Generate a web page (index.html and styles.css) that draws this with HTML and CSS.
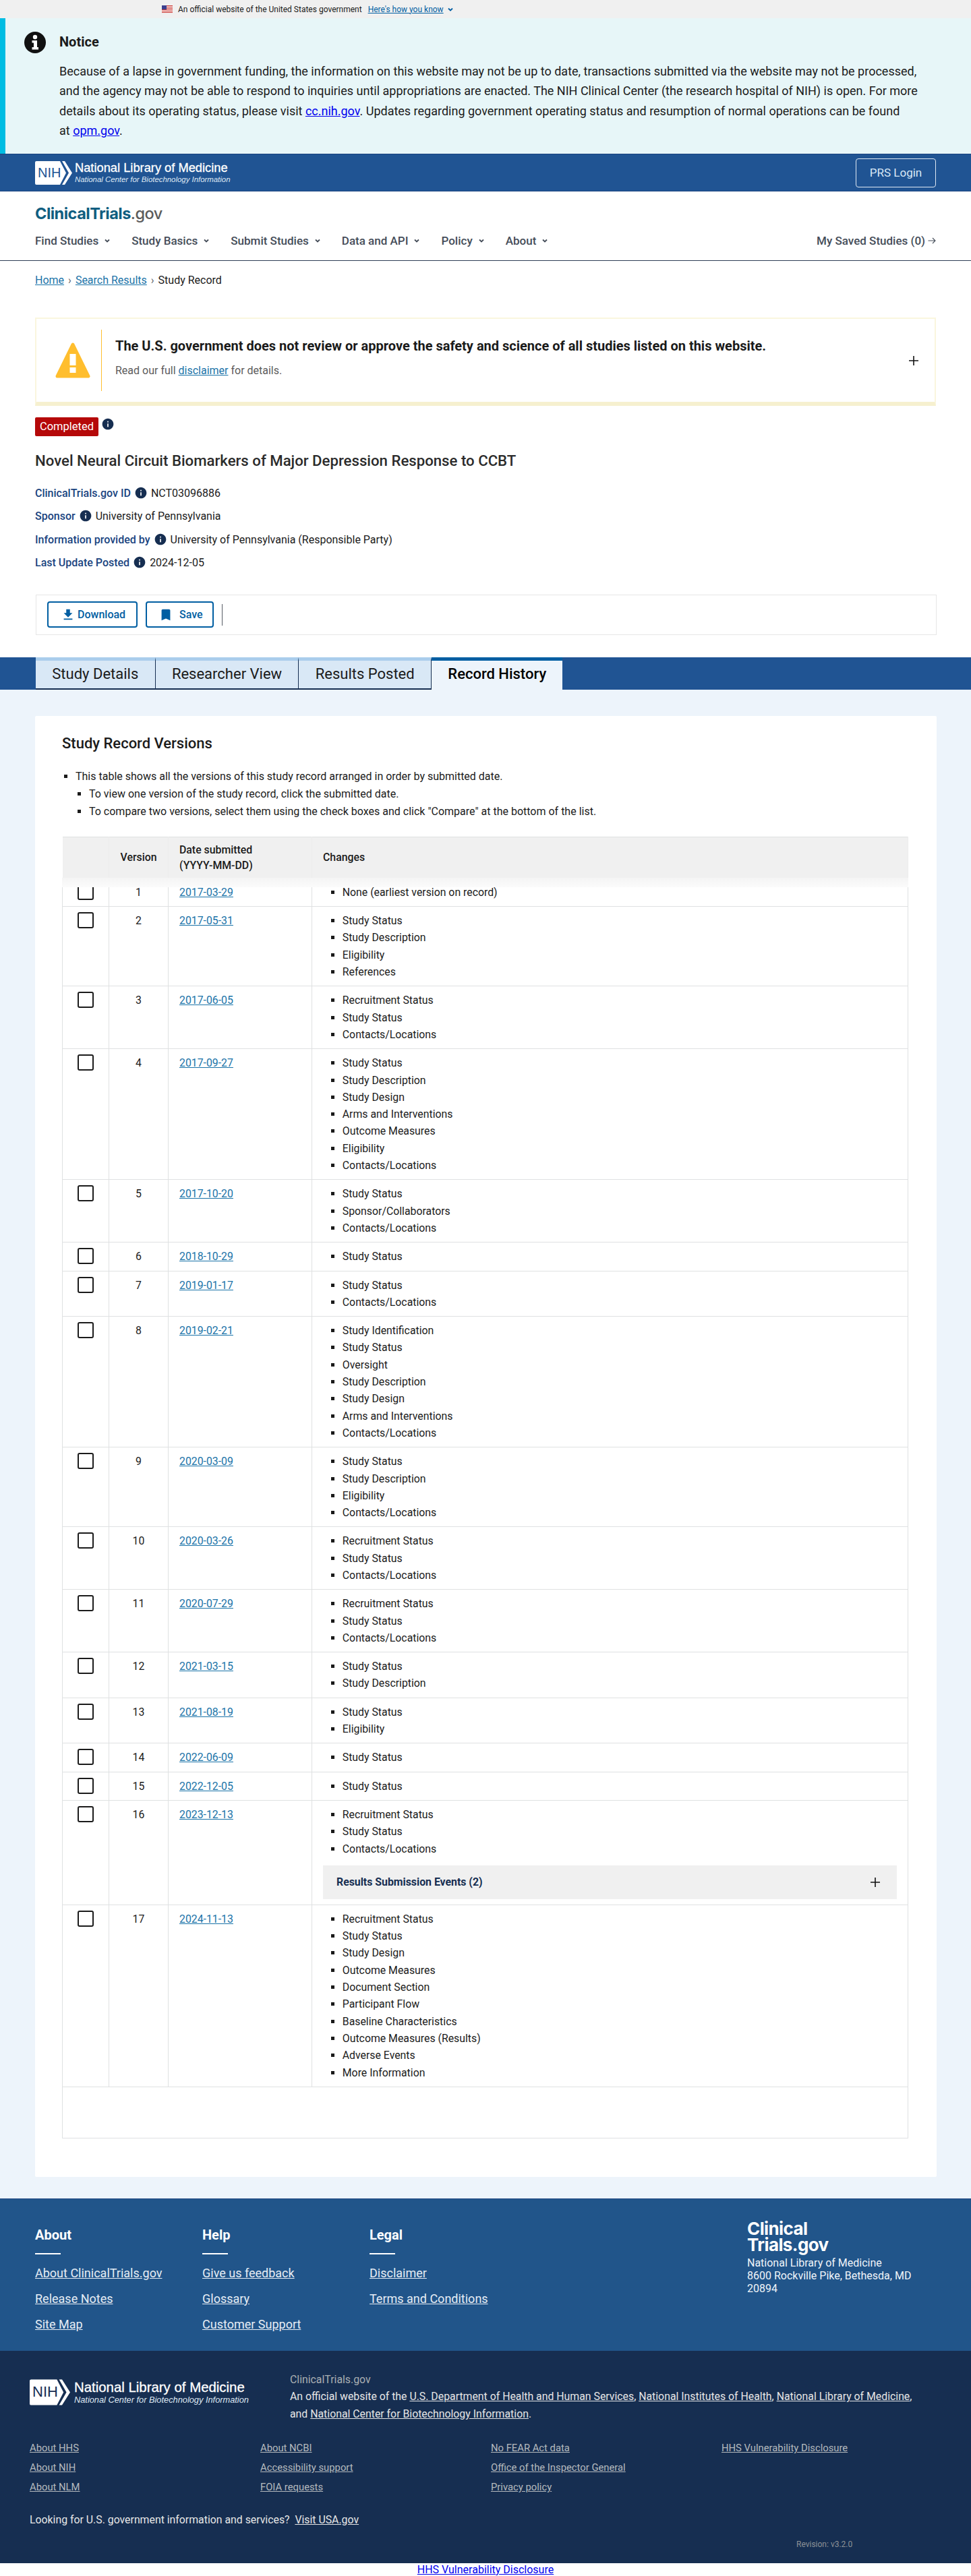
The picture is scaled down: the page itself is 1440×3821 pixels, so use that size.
FILE: index.html
```html
<!DOCTYPE html>
<html lang="en">
<head>
    <meta charset="UTF-8">
    <meta name="viewport" content="width=device-width, initial-scale=1.0">
    <title>Record History | ClinicalTrials.gov</title>
    <link rel="stylesheet" href="styles.css">
</head>
<body>
    <!-- Shared icons -->
    <svg class="icon-defs" aria-hidden="true">
        <symbol id="i-info" viewBox="0 0 24 24"><path d="M12 2C6.48 2 2 6.48 2 12s4.48 10 10 10 10-4.48 10-10S17.52 2 12 2zm1 15h-2v-6h2v6zm0-8h-2V7h2v2z"/></symbol>
        <symbol id="i-chev" viewBox="0 0 10 10"><path d="M2 3.5 5 6.5 8 3.5" fill="none" stroke="currentColor" stroke-width="1.8"/></symbol>
        <symbol id="i-plus" viewBox="0 0 14 14"><path d="M6.2 0h1.6v6.2H14v1.6H7.800V14H6.200V7.800H0V6.200h6.200z"/></symbol>
        <symbol id="i-nih" viewBox="0 0 55 35"><path d="M2 0H37L46 17.500 37 35H2Q0 35 0 33V2Q0 0 2 0zM40 0H44L55 17.500 44 35H40L50 17.500z"/></symbol>
    </svg>

    <!-- Gov banner -->
    <div class="gov-banner">
        <svg class="flag" viewBox="0 0 16 11">
            <rect width="16" height="11" fill="#fff"/>
            <path d="M0 0h16v1H0zM0 2h16v1H0zM0 4h16v1H0zM0 6h16v1H0zM0 8h16v1H0zM0 10h16v1H0z" fill="#c9342f"/>
            <rect width="7" height="6" fill="#3b3f8f"/>
        </svg>
        <span>An official website of the United States government</span>
        <a href="#">Here's how you know</a>
        <svg class="chev chev-blue"><use href="#i-chev"/></svg>
    </div>

    <!-- Notice -->
    <section class="notice">
        <svg class="notice-icon" viewBox="0 0 32 32">
            <circle cx="16" cy="16" r="16" fill="#111"/>
            <circle cx="16" cy="8" r="3.200" fill="#fff"/>
            <path d="M11.500 13h7.500v10h2v3.500H11.500V23h2.500v-6.500h-2.500z" fill="#fff"/>
        </svg>
        <div>
            <h2>Notice</h2>
            <p>Because of a lapse in government funding, the information on this website may not be up to date, transactions submitted via the website may not be processed, and the agency may not be able to respond to inquiries until appropriations are enacted. The NIH Clinical Center (the research hospital of NIH) is open. For more details about its operating status, please visit <a href="#">cc.nih.gov</a>. Updates regarding government operating status and resumption of normal operations can be found at&nbsp;<a href="#">opm.gov</a>.</p>
        </div>
    </section>

    <!-- NLM bar -->
    <div class="nlm-bar">
        <div class="nlm-logo">
            <div class="nih-mark">
                <svg><use href="#i-nih"/></svg>
                <span>NIH</span>
            </div>
            <div class="nlm-names">
                <div class="nlm-name">National Library of Medicine</div>
                <div class="nlm-sub">National Center for Biotechnology Information</div>
            </div>
        </div>
        <a class="prs-login" href="#">PRS Login</a>
    </div>

    <!-- Site header -->
    <header class="site-header">
        <div class="site-logo">ClinicalTrials<span>.gov</span></div>
        <nav class="site-nav">
            <a href="#">Find Studies<svg class="chev"><use href="#i-chev"/></svg></a>
            <a href="#">Study Basics<svg class="chev"><use href="#i-chev"/></svg></a>
            <a href="#">Submit Studies<svg class="chev"><use href="#i-chev"/></svg></a>
            <a href="#">Data and API<svg class="chev"><use href="#i-chev"/></svg></a>
            <a href="#">Policy<svg class="chev"><use href="#i-chev"/></svg></a>
            <a href="#">About<svg class="chev"><use href="#i-chev"/></svg></a>
            <a class="saved" href="#">My Saved Studies (0)<svg class="arrow" viewBox="0 0 12 12"><path d="M0.500 6H11M7 2l4 4-4 4" fill="none" stroke="currentColor" stroke-width="1.100"/></svg></a>
        </nav>
    </header>

    <!-- Study summary -->
    <div class="study-top">
        <div class="breadcrumb">
            <a href="#">Home</a><span class="sep">&rsaquo;</span><a href="#">Search Results</a><span class="sep">&rsaquo;</span><span>Study Record</span>
        </div>

        <div class="disclaimer">
            <svg class="warn-icon" viewBox="0 0 52 53">
                <path d="M26 3 49 50H3z" fill="#ffbe2e" stroke="#ffbe2e" stroke-width="5" stroke-linejoin="round"/>
                <rect x="21.500" y="17" width="9" height="17" fill="#fff"/>
                <rect x="21.500" y="37" width="9" height="8" fill="#fff"/>
            </svg>
            <div class="disclaimer-text">
                <h3>The U.S. government does not review or approve the safety and science of all studies listed on this website.</h3>
                <p>Read our full <a href="#">disclaimer</a> for details.</p>
            </div>
            <svg class="plus"><use href="#i-plus"/></svg>
        </div>

        <div class="status-row">
            <span class="badge">Completed</span>
            <svg class="info"><use href="#i-info"/></svg>
        </div>

        <h1>Novel Neural Circuit Biomarkers of Major Depression Response to CCBT</h1>

        <div class="meta"><b>ClinicalTrials.gov ID</b><svg class="info"><use href="#i-info"/></svg><span>NCT03096886</span></div>
        <div class="meta"><b>Sponsor</b><svg class="info"><use href="#i-info"/></svg><span>University of Pennsylvania</span></div>
        <div class="meta"><b>Information provided by</b><svg class="info"><use href="#i-info"/></svg><span>University of Pennsylvania (Responsible Party)</span></div>
        <div class="meta"><b>Last Update Posted</b><svg class="info"><use href="#i-info"/></svg><span>2024-12-05</span></div>

        <div class="actions">
            <button class="btn btn-download">
                <svg viewBox="0 0 24 24"><path d="M19 9h-4V3H9v6H5l7 7 7-7zM5 18v2h14v-2H5z"/></svg>Download
            </button>
            <button class="btn btn-save">
                <svg viewBox="0 0 24 24"><path d="M17 3H7c-1.100 0-1.990.9-1.990 2L5 21l7-3 7 3V5c0-1.100-.9-2-2-2z"/></svg>Save
            </button>
            <span class="actions-divider"></span>
        </div>
    </div>

    <!-- Tabs -->
    <div class="tabs">
        <a class="tab" href="#">Study Details</a>
        <a class="tab" href="#">Researcher View</a>
        <a class="tab" href="#">Results Posted</a>
        <a class="tab active" href="#">Record History</a>
    </div>

    <main class="page-bg">
        <section class="card">
            <h2>Study Record Versions</h2>
            <ul class="intro">
                <li>This table shows all the versions of this study record arranged in order by submitted date.
                    <ul>
                        <li>To view one version of the study record, click the submitted date.</li>
                        <li>To compare two versions, select them using the check boxes and click "Compare" at the bottom of the list.</li>
                    </ul>
                </li>
            </ul>

            <div class="table-wrap">
                <table class="versions">
                    <colgroup>
                        <col class="col-check"><col class="col-version"><col class="col-date"><col>
                    </colgroup>
                    <thead>
                        <tr>
                            <th></th>
                            <th class="center">Version</th>
                            <th>Date submitted<br>(YYYY-MM-DD)</th>
                            <th>Changes</th>
                        </tr>
                    </thead>
                    <tbody>
                        <tr>
                            <td><span class="check"></span></td><td class="center">1</td><td><a href="#">2017-03-29</a></td>
                            <td><ul><li>None (earliest version on record)</li></ul></td>
                        </tr>
                        <tr>
                            <td><span class="check"></span></td><td class="center">2</td><td><a href="#">2017-05-31</a></td>
                            <td><ul><li>Study Status</li><li>Study Description</li><li>Eligibility</li><li>References</li></ul></td>
                        </tr>
                        <tr>
                            <td><span class="check"></span></td><td class="center">3</td><td><a href="#">2017-06-05</a></td>
                            <td><ul><li>Recruitment Status</li><li>Study Status</li><li>Contacts/Locations</li></ul></td>
                        </tr>
                        <tr>
                            <td><span class="check"></span></td><td class="center">4</td><td><a href="#">2017-09-27</a></td>
                            <td><ul><li>Study Status</li><li>Study Description</li><li>Study Design</li><li>Arms and Interventions</li><li>Outcome Measures</li><li>Eligibility</li><li>Contacts/Locations</li></ul></td>
                        </tr>
                        <tr>
                            <td><span class="check"></span></td><td class="center">5</td><td><a href="#">2017-10-20</a></td>
                            <td><ul><li>Study Status</li><li>Sponsor/Collaborators</li><li>Contacts/Locations</li></ul></td>
                        </tr>
                        <tr>
                            <td><span class="check"></span></td><td class="center">6</td><td><a href="#">2018-10-29</a></td>
                            <td><ul><li>Study Status</li></ul></td>
                        </tr>
                        <tr>
                            <td><span class="check"></span></td><td class="center">7</td><td><a href="#">2019-01-17</a></td>
                            <td><ul><li>Study Status</li><li>Contacts/Locations</li></ul></td>
                        </tr>
                        <tr>
                            <td><span class="check"></span></td><td class="center">8</td><td><a href="#">2019-02-21</a></td>
                            <td><ul><li>Study Identification</li><li>Study Status</li><li>Oversight</li><li>Study Description</li><li>Study Design</li><li>Arms and Interventions</li><li>Contacts/Locations</li></ul></td>
                        </tr>
                        <tr>
                            <td><span class="check"></span></td><td class="center">9</td><td><a href="#">2020-03-09</a></td>
                            <td><ul><li>Study Status</li><li>Study Description</li><li>Eligibility</li><li>Contacts/Locations</li></ul></td>
                        </tr>
                        <tr>
                            <td><span class="check"></span></td><td class="center">10</td><td><a href="#">2020-03-26</a></td>
                            <td><ul><li>Recruitment Status</li><li>Study Status</li><li>Contacts/Locations</li></ul></td>
                        </tr>
                        <tr>
                            <td><span class="check"></span></td><td class="center">11</td><td><a href="#">2020-07-29</a></td>
                            <td><ul><li>Recruitment Status</li><li>Study Status</li><li>Contacts/Locations</li></ul></td>
                        </tr>
                        <tr>
                            <td><span class="check"></span></td><td class="center">12</td><td><a href="#">2021-03-15</a></td>
                            <td><ul><li>Study Status</li><li>Study Description</li></ul></td>
                        </tr>
                        <tr>
                            <td><span class="check"></span></td><td class="center">13</td><td><a href="#">2021-08-19</a></td>
                            <td><ul><li>Study Status</li><li>Eligibility</li></ul></td>
                        </tr>
                        <tr>
                            <td><span class="check"></span></td><td class="center">14</td><td><a href="#">2022-06-09</a></td>
                            <td><ul><li>Study Status</li></ul></td>
                        </tr>
                        <tr>
                            <td><span class="check"></span></td><td class="center">15</td><td><a href="#">2022-12-05</a></td>
                            <td><ul><li>Study Status</li></ul></td>
                        </tr>
                        <tr>
                            <td><span class="check"></span></td><td class="center">16</td><td><a href="#">2023-12-13</a></td>
                            <td>
                                <ul><li>Recruitment Status</li><li>Study Status</li><li>Contacts/Locations</li></ul>
                                <div class="events"><b>Results Submission Events (2)</b><svg class="plus"><use href="#i-plus"/></svg></div>
                            </td>
                        </tr>
                        <tr>
                            <td><span class="check"></span></td><td class="center">17</td><td><a href="#">2024-11-13</a></td>
                            <td><ul><li>Recruitment Status</li><li>Study Status</li><li>Study Design</li><li>Outcome Measures</li><li>Document Section</li><li>Participant Flow</li><li>Baseline Characteristics</li><li>Outcome Measures (Results)</li><li>Adverse Events</li><li>More Information</li></ul></td>
                        </tr>
                    </tbody>
                </table>
                <div class="table-foot"></div>
                <!-- sticky header runs over the top of row 1 -->
                <div class="header-fade"></div>
            </div>
        </section>
    </main>

    <!-- Footer -->
    <footer>
        <div class="footer-top">
            <div class="footer-col">
                <h4>About</h4>
                <a href="#">About ClinicalTrials.gov</a>
                <a href="#">Release Notes</a>
                <a href="#">Site Map</a>
            </div>
            <div class="footer-col">
                <h4>Help</h4>
                <a href="#">Give us feedback</a>
                <a href="#">Glossary</a>
                <a href="#">Customer Support</a>
            </div>
            <div class="footer-col">
                <h4>Legal</h4>
                <a href="#">Disclaimer</a>
                <a href="#">Terms and Conditions</a>
            </div>
            <div class="footer-address">
                <div class="footer-logo">Clinical<br>Trials.gov</div>
                <p>National Library of Medicine<br>8600 Rockville Pike, Bethesda, MD 20894</p>
            </div>
        </div>

        <div class="footer-bottom">
            <div class="footer-brand">
                <div class="nlm-logo footer-nlm">
                    <div class="nih-mark">
                        <svg><use href="#i-nih"/></svg>
                        <span>NIH</span>
                    </div>
                    <div class="nlm-names">
                        <div class="nlm-name">National Library of Medicine</div>
                        <div class="nlm-sub">National Center for Biotechnology Information</div>
                    </div>
                </div>
                <div class="footer-official">
                    <div class="footer-site">ClinicalTrials.gov</div>
                    An official website of the <a href="#">U.S. Department of Health and Human Services</a>, <a href="#">National Institutes of Health</a>, <a href="#">National Library of Medicine</a>, and <a href="#">National Center for Biotechnology Information</a>.
                </div>
            </div>
            <div class="footer-links">
                <a href="#">About HHS</a>
                <a href="#">About NCBI</a>
                <a href="#">No FEAR Act data</a>
                <a href="#">HHS Vulnerability Disclosure</a>
                <a href="#">About NIH</a>
                <a href="#">Accessibility support</a>
                <a href="#">Office of the Inspector General</a>
                <span></span>
                <a href="#">About NLM</a>
                <a href="#">FOIA requests</a>
                <a href="#">Privacy policy</a>
            </div>
            <div class="footer-usa">Looking for U.S. government information and services?&nbsp; <a href="#">Visit USA.gov</a></div>
            <div class="footer-revision">Revision: v3.2.0</div>
        </div>
    </footer>
    <div class="vuln-link"><a href="#">HHS Vulnerability Disclosure</a></div>
</body>
</html>
```

FILE: styles.css
```css
/* Global */
* {
    box-sizing: border-box;
}
body {
    margin: 0;
    font-family: Roboto, "Liberation Sans", sans-serif;
    font-size: 16px;
    line-height: 26px;
    color: #1b1b1b;
    background-color: #fff;
}
h1, h2, h3, h4, p, ul {
    margin: 0;
}
.icon-defs {
    display: none;
}

/* Gov banner */
.gov-banner {
    display: flex;
    align-items: center;
    height: 27px;
    padding-left: 240px;
    background-color: #f0f0f0;
    font-size: 12px;
    line-height: 16px;
}
.flag {
    width: 16px;
    height: 11px;
    margin-right: 8px;
}
.gov-banner a {
    margin-left: 9px;
    color: #005ea2;
}
.chev {
    width: 10px;
    height: 10px;
    margin-left: 8px;
}
.chev-blue {
    color: #005ea2;
    margin-left: 5px;
}

/* Notice */
.notice {
    display: flex;
    height: 201px;
    padding: 20px 75px 0 0;
    background-color: #e7f6f8;
    border-left: 8px solid #00bde3;
}
.notice-icon {
    flex: none;
    width: 32px;
    height: 32px;
    margin: 0 20px 0 28px;
}
.notice h2 {
    font-size: 20px;
    line-height: 30px;
    font-weight: 700;
    margin-bottom: 14px;
}
.notice p {
    font-size: 18px;
    line-height: 29.44px;
    color: #1b1b1b;
}

/* NLM bar */
.nlm-bar {
    display: flex;
    align-items: center;
    justify-content: space-between;
    height: 56px;
    padding: 0 52px;
    background-color: #205493;
    border-top: 1px solid #1a4480;
    border-bottom: 1px solid #1a4480;
}
.nlm-logo {
    display: flex;
    align-items: center;
    color: #fff;
    font-family: "Liberation Sans", Arial, sans-serif;
}
.nih-mark {
    position: relative;
    width: 55px;
    height: 35px;
    margin-right: 4px;
    color: #205493;
}
.nih-mark svg {
    display: block;
    width: 55px;
    height: 35px;
    fill: #fff;
}
.nih-mark span {
    position: absolute;
    left: 4px;
    top: 4px;
    font-size: 20px;
    line-height: 26px;
}
.nlm-name {
    font-size: 18.3px;
    line-height: 20px;
    -webkit-text-stroke: 0.3px #fff;
}
.nlm-sub {
    font-size: 11.4px;
    line-height: 14px;
    font-style: italic;
    color: #dfe8f3;
}
.prs-login {
    width: 119px;
    height: 43px;
    border: 1px solid #dfe8f3;
    border-radius: 4px;
    color: #d9e8f6;
    font-size: 17px;
    text-align: center;
    line-height: 41px;
    text-decoration: none;
}

/* Site header */
.site-header {
    padding: 20px 52px 0;
    border-bottom: 1px solid #2e3d55;
}
.site-logo {
    font-family: Inter, sans-serif;
    font-size: 23.5px;
    line-height: 26px;
    font-weight: 700;
    color: #0f5e80;
    letter-spacing: -0.5px;
}
.site-logo span {
    color: #5c5c5c;
    font-weight: 500;
}
.site-nav {
    display: flex;
    align-items: center;
    gap: 31px;
    margin-top: 14px;
    padding-bottom: 16px;
}
.site-nav a {
    display: flex;
    align-items: center;
    color: #454d59;
    font-size: 17px;
    font-weight: 500;
    text-decoration: none;
}
.site-nav .saved {
    margin-left: auto;
}
.arrow {
    width: 12px;
    height: 12px;
    margin-left: 4px;
}

/* Study summary */
.study-top {
    padding: 16px 52px 33px;
}
.breadcrumb a,
.disclaimer a,
.versions a {
    color: #1a73a8;
}
.breadcrumb .sep {
    margin: 0 6px;
    color: #565c65;
}
.disclaimer {
    display: flex;
    align-items: center;
    height: 131px;
    margin-top: 42px;
    border: 2px solid #faf6de;
    border-bottom: 6px solid #f6f0cf;
}
.warn-icon {
    flex: none;
    width: 52px;
    height: 53px;
    margin: 0 16px 0 28px;
}
.disclaimer-text {
    height: 91px;
    padding: 10px 0 0 20px;
    border-left: 1px solid #ffbe2e;
}
.disclaimer h3 {
    font-size: 20px;
    line-height: 28px;
    font-weight: 700;
    margin-bottom: 10px;
}
.disclaimer p {
    color: #5c5c5c;
}
.plus {
    flex: none;
    width: 14px;
    height: 14px;
    fill: #111;
}
.disclaimer .plus {
    margin: 0 24px 0 auto;
}
.status-row {
    display: flex;
    align-items: flex-start;
    gap: 4px;
    margin-top: 17px;
}
.badge {
    width: 94px;
    height: 28px;
    border-radius: 2px;
    background-color: #b50909;
    color: #fff;
    font-size: 16.5px;
    text-align: center;
    line-height: 28px;
}
.info {
    flex: none;
    width: 20px;
    height: 20px;
    fill: #162e51;
}
h1 {
    margin: 20px 0 20px;
    font-size: 22.2px;
    line-height: 32px;
    font-weight: 500;
    color: #2b2b2b;
}
.meta {
    display: flex;
    align-items: center;
    gap: 5px;
    margin-bottom: 8.300px;
}
.meta b {
    font-weight: 500;
    color: #1a4480;
}
.meta .info {
    margin-top: -2px;
}
.actions {
    display: flex;
    align-items: center;
    gap: 12px;
    height: 60px;
    margin: 34px -1px 0 1px;
    padding-left: 16px;
    border: 1px solid #e6e6e6;
}
.btn {
    display: flex;
    align-items: center;
    height: 39px;
    padding: 0;
    background-color: #fff;
    border: 2px solid #005ea2;
    border-radius: 4px;
    color: #005ea2;
    font-family: inherit;
    font-size: 16px;
    font-weight: 500;
}
.btn svg {
    width: 22px;
    height: 22px;
    fill: #005ea2;
}
.btn-download {
    width: 134px;
    padding-left: 18px;
    gap: 3px;
}
.btn-save {
    width: 101px;
    padding-left: 17px;
    gap: 9px;
}
.actions-divider {
    width: 1px;
    height: 32px;
    background-color: #565c65;
}

/* Tabs */
.tabs {
    display: flex;
    height: 48px;
    padding-left: 53px;
    background-color: #205493;
}
.tab {
    padding: 0 24.3px;
    background-color: #d9e8f6;
    border-top: 5px solid #aacdec;
    border-right: 1px solid #162e51;
    border-bottom: 2px solid #162e51;
    color: #1b1b1b;
    font-size: 22px;
    line-height: 40px;
    text-decoration: none;
}
.tab.active {
    background-color: #edf4fb;
    border-top: 5px solid #005ea2;
    border-right: 0;
    border-bottom: 0;
    font-weight: 500;
    color: #000;
}

/* Versions card */
.page-bg {
    padding: 39px 51px 31.400px 52px;
    background-color: #edf4fb;
}
.card {
    padding: 25px 42px 57.600px 40px;
    background-color: #fff;
    border-radius: 2px;
}
.card h2 {
    font-size: 22px;
    line-height: 32px;
    font-weight: 500;
}
.intro {
    margin-top: 20px;
    padding-left: 20px;
    list-style: square;
}
.intro ul {
    padding-left: 20px;
    list-style: square;
}
.table-wrap {
    position: relative;
    margin-top: 24px;
}
.versions {
    width: 100%;
    table-layout: fixed;
    border-collapse: collapse;
    font-size: 15.840px;
    line-height: 25.300px;
}
.col-check {
    width: 69px;
}
.col-version {
    width: 88px;
}
.col-date {
    width: 213px;
}
.versions th {
    height: 61px;
    padding: 0 16px;
    background-color: #f0f0f0;
    border-top: 1px solid #dfe1e2;
    border-right: 1px solid #ececec;
    font-weight: 500;
    line-height: 23px;
    text-align: left;
    vertical-align: middle;
}
.versions td {
    padding: 8px 16px;
    border: 1px solid #dfe1e2;
    vertical-align: top;
}
.versions .center {
    text-align: center;
}
.versions td:first-child {
    padding: 8px 0 0 22px;
}
.check {
    display: block;
    width: 24px;
    height: 24px;
    border: 2px solid #1b1b1b;
    border-radius: 3px;
}
.versions ul {
    padding-left: 28.800px;
    list-style: square;
}
.events {
    display: flex;
    align-items: center;
    justify-content: space-between;
    height: 50px;
    margin-top: 12px;
    padding: 0 25px 0 20px;
    background-color: #f0f0f0;
}
.events b {
    font-weight: 700;
    color: #162e51;
}
.table-foot {
    height: 76px;
    border: 1px solid #dfe1e2;
    border-top: 0;
}
.header-fade {
    position: absolute;
    top: 61px;
    left: 0;
    right: 0;
    height: 14px;
    background: linear-gradient(#f4f4f4, #fbfbfb);
}

/* Footer */
.footer-top {
    display: flex;
    height: 226px;
    padding: 32px 52px 0;
    background-color: #21558a;
    border-top: 1px solid #1a4480;
    color: #fff;
}
.footer-col {
    width: 248px;
    padding-top: 8px;
}
.footer-col h4 {
    font-size: 20px;
    line-height: 26px;
    font-weight: 700;
}
.footer-col h4::after {
    content: "";
    display: block;
    width: 38px;
    height: 2px;
    margin: 14px 0 15px;
    background-color: #fff;
}
.footer-col a {
    display: block;
    margin-bottom: 12px;
    color: #e6edf5;
    font-size: 18px;
}
.footer-address {
    width: 280px;
    margin-left: auto;
    margin-right: 0;
}
.footer-logo {
    font-family: Inter, sans-serif;
    font-size: 26px;
    line-height: 24px;
    font-weight: 700;
    letter-spacing: -0.6px;
}
.footer-address p {
    margin-top: 5px;
    line-height: 19px;
    color: #f0f4f9;
}
.footer-bottom {
    height: 315px;
    padding: 30px 44px 0;
    background-color: #162e51;
    color: #e6e6e6;
}
.footer-brand {
    display: flex;
}
.footer-nlm {
    align-self: flex-start;
    width: 386px;
    margin-top: 12px;
}
.footer-nlm .nih-mark {
    width: 60px;
    height: 39px;
    margin-right: 6px;
    color: #162e51;
}
.footer-nlm .nih-mark svg {
    width: 60px;
    height: 39px;
}
.footer-nlm .nih-mark span {
    top: 6px;
    font-size: 22px;
}
.footer-nlm .nlm-name {
    font-size: 20.4px;
    line-height: 23px;
}
.footer-nlm .nlm-sub {
    font-size: 12.8px;
}
.footer-official {
    width: 930px;
    font-size: 15.840px;
    line-height: 25.500px;
}
.footer-official a {
    color: #e6e6e6;
}
.footer-site {
    color: #a9aeb1;
}
.footer-links {
    display: grid;
    grid-template-columns: repeat(4, 342px);
    margin-top: 24px;
    font-size: 14.800px;
    line-height: 29px;
}
.footer-links a {
    justify-self: start;
    color: #b5babe;
}
.footer-usa {
    margin-top: 21px;
    font-size: 15.840px;
}
.footer-usa a {
    color: #e6e6e6;
}
.footer-revision {
    margin-top: 13px;
    padding-left: 1137px;
    color: #8d9297;
    font-size: 12px;
    line-height: 20px;
}
.vuln-link {
    height: 20px;
    line-height: 20px;
    text-align: center;
}
.vuln-link a {
    color: #0000ee;
}
```
